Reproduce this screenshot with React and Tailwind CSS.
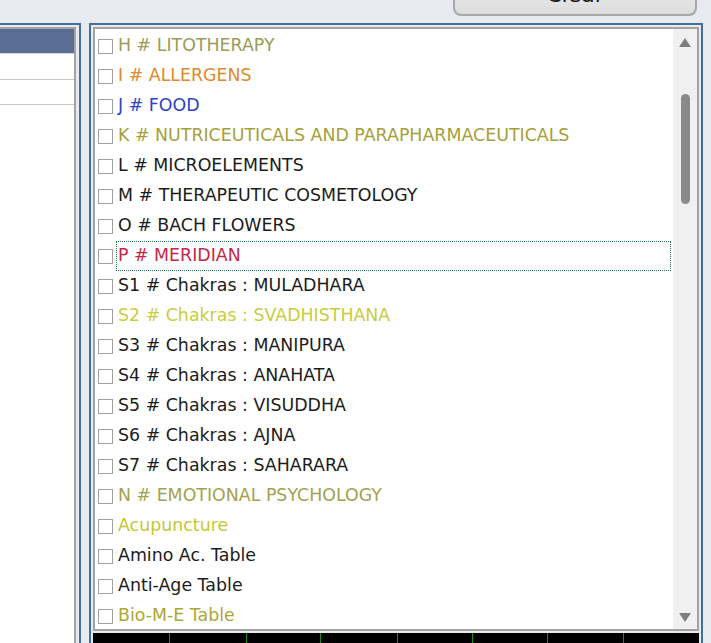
const ITEMS = [
  { label: "H # LITOTHERAPY", color: "text-[#9c9c58]" },
  { label: "I # ALLERGENS", color: "text-[#dc8a2c]" },
  { label: "J # FOOD", color: "text-[#2c44c4]" },
  { label: "K # NUTRICEUTICALS AND PARAPHARMACEUTICALS", color: "text-[#a6a03a]" },
  { label: "L # MICROELEMENTS", color: "text-[#1c1c1c]" },
  { label: "M # THERAPEUTIC COSMETOLOGY", color: "text-[#1c1c1c]" },
  { label: "O # BACH FLOWERS", color: "text-[#1c1c1c]" },
  { label: "P # MERIDIAN", color: "text-[#c42848]", focused: true },
  { label: "S1 # Chakras : MULADHARA", color: "text-[#1c1c1c]" },
  { label: "S2 # Chakras : SVADHISTHANA", color: "text-[#cacc40]" },
  { label: "S3 # Chakras : MANIPURA", color: "text-[#1c1c1c]" },
  { label: "S4 # Chakras : ANAHATA", color: "text-[#1c1c1c]" },
  { label: "S5 # Chakras : VISUDDHA", color: "text-[#1c1c1c]" },
  { label: "S6 # Chakras : AJNA", color: "text-[#1c1c1c]" },
  { label: "S7 # Chakras : SAHARARA", color: "text-[#1c1c1c]" },
  { label: "N # EMOTIONAL PSYCHOLOGY", color: "text-[#a2a250]" },
  { label: "Acupuncture", color: "text-[#c6c632]" },
  { label: "Amino Ac. Table", color: "text-[#1c1c1c]" },
  { label: "Anti-Age Table", color: "text-[#1c1c1c]" },
  { label: "Bio-M-E Table", color: "text-[#ada835]" },
];

export default function App() {
  return (
    <div
      className="w-[711px] h-[643px] overflow-hidden bg-[#e7eaee] flex flex-col"
      style={{ fontFamily: '"DejaVu Sans", sans-serif' }}
    >
      {/* top strip with clear button */}
      <div className="h-[23px] shrink-0 flex">
        <div className="ml-[453px] w-[244px] h-[40px] -mt-[24px] rounded-b-[8px] border-2 border-t-0 border-[#a8a8a8] bg-gradient-to-b from-[#f4f4f4] to-[#dcdcdc] flex items-end justify-center pb-[8px]">
          <span className="text-[22px] leading-[22px] text-[#1a1a1a]">Clear</span>
        </div>
      </div>

      <div className="flex flex-1 min-h-0">
        {/* left panel */}
        <div className="w-[81px] shrink-0 border-2 border-l-0 border-b-0 border-[#41709c] pt-[2px] pr-[3px] flex flex-col">
          <div className="flex-1 bg-white border-2 border-l-0 border-b-0 border-[#a3a3a3] flex flex-col">
            <div className="h-[25px] bg-[#5a6e94] border-b border-[#d4d4d4]" />
            <div className="h-[26px] bg-white border-b border-[#c8c8c8]" />
            <div className="h-[25px] bg-white border-b border-[#c8c8c8]" />
          </div>
        </div>

        {/* right panel */}
        <div className="ml-[8px] w-[614px] shrink-0 border-2 border-b-0 border-[#41709c] pt-[2px] px-[2px] flex flex-col">
          <div className="h-[604px] shrink-0 bg-white border-2 border-[#a3a3a3] flex">
            <div className="flex-1 pt-[2px] pl-[3px] pr-[2px] flex flex-col">
              {ITEMS.map((item) => (
                <div key={item.label} className="h-[30px] shrink-0 flex items-center">
                  <div className="w-[15px] h-[15px] shrink-0 border border-[#a0a0a0] bg-white" />
                  <div
                    className={`ml-[3px] flex-1 h-[30px] flex items-center pl-[1px] border border-dotted ${
                      item.focused ? "border-[#2d6e52]" : "border-transparent"
                    }`}
                  >
                    <span className={`text-[17.4px] leading-none whitespace-nowrap ${item.color}`}>
                      {item.label}
                    </span>
                  </div>
                </div>
              ))}
            </div>

            {/* scrollbar */}
            <div className="w-[24px] shrink-0 bg-[#f0f0f0] flex flex-col items-center">
              <svg width="12" height="9" viewBox="0 0 12 9" className="mt-[9px]">
                <polygon points="6,0 12,9 0,9" fill="#7e7e7e" />
              </svg>
              <div className="mt-[47px] w-[9px] h-[110px] rounded-full bg-[#8a8a8a]" />
              <div className="flex-1" />
              <svg width="12" height="9" viewBox="0 0 12 9" className="mb-[7px]">
                <polygon points="0,0 12,0 6,9" fill="#7e7e7e" />
              </svg>
            </div>
          </div>

          {/* black chart strip */}
          <div className="mt-[2px] h-[20px] shrink-0 bg-black">
            <svg width="100%" height="20">
              {[76, 153, 227, 304, 379, 454, 530].map((x) => (
                <line key={x} x1={x + 0.5} y1="0" x2={x + 0.5} y2="20" stroke="#1f8a1f" strokeWidth="1" />
              ))}
            </svg>
          </div>
        </div>
      </div>
    </div>
  );
}
